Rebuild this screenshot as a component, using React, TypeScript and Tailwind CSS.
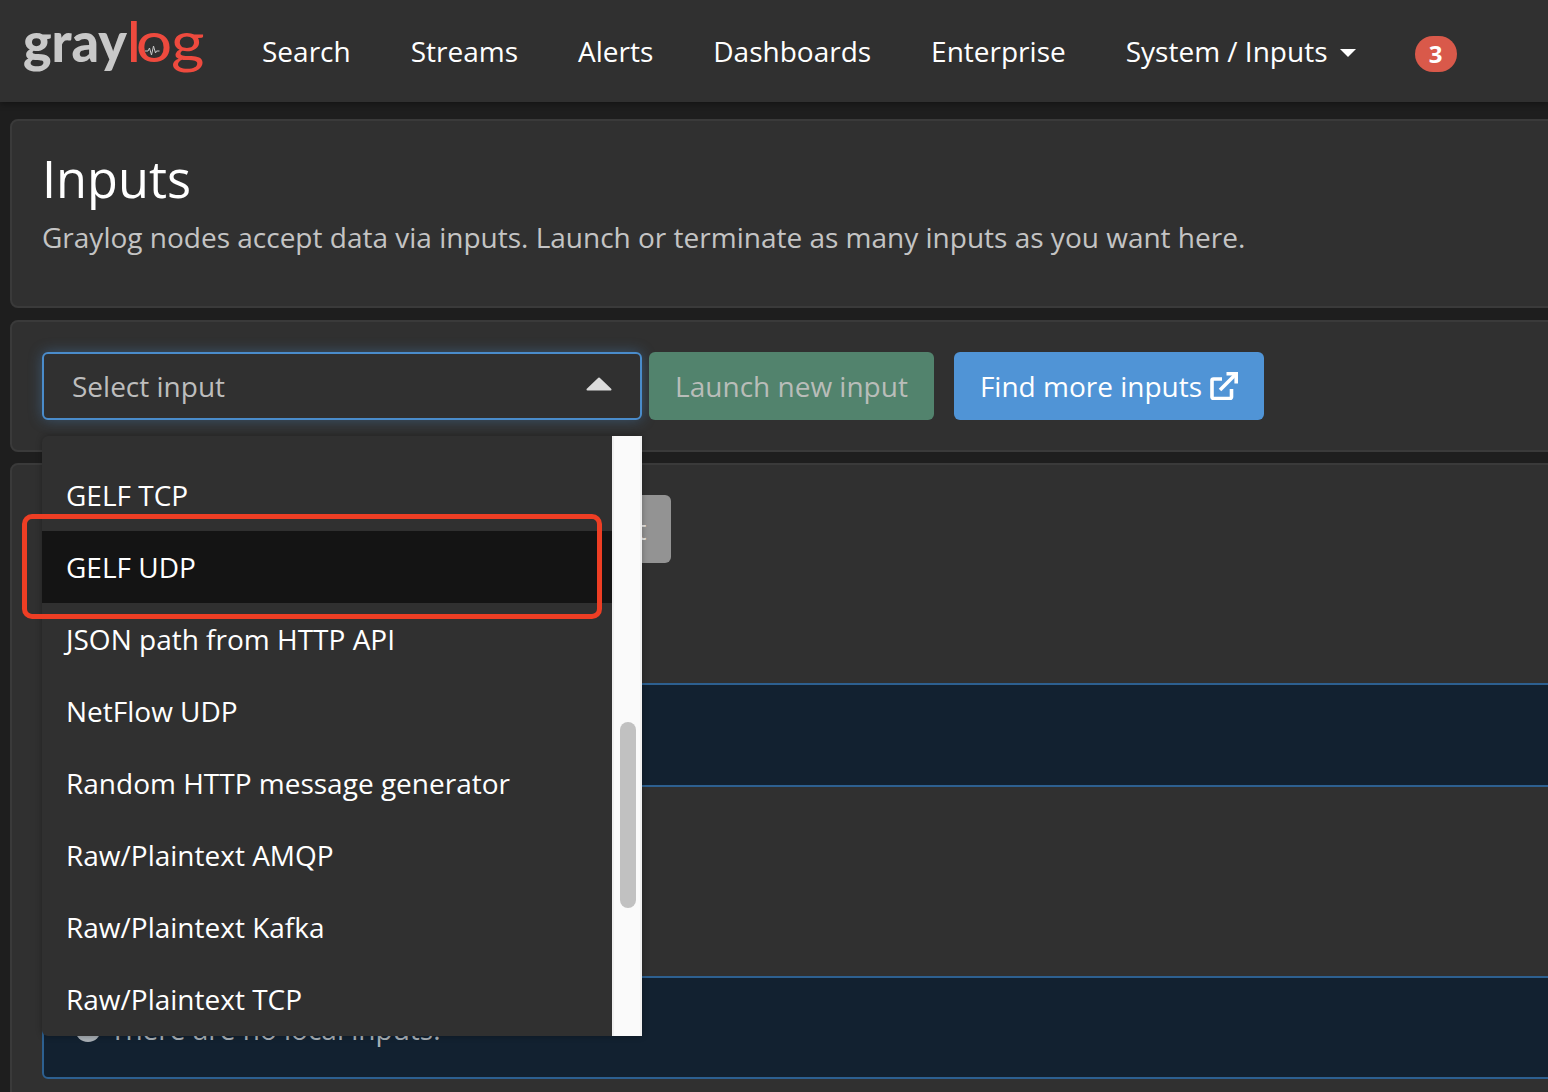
import React from "react";

const font = "font-['Open_Sans',sans-serif]";

function Logo() {
  return (
    <svg width="182" height="56" viewBox="0 0 182 56" className="shrink-0 overflow-visible">
      <text x="0" y="39" fontFamily="Lato, sans-serif" fontWeight="900" fontSize="56" textLength="104" lengthAdjust="spacingAndGlyphs" fill="#c8c8c8">gray</text>
      <text transform="translate(105 39) scale(1.15 1)" x="-1.500 6.700 37.300" y="0" fontFamily="Lato, sans-serif" fontWeight="400" fontSize="56" fill="#ee4a3e">log</text>
      <path d="M122 28h3l1.500-3 2 7 2-9 2 7 1-2h3" fill="none" stroke="#c8c8c8" strokeWidth="1" />
    </svg>
  );
}

function ExternalIcon() {
  return (
    <svg width="28" height="28" viewBox="0 0 28 28" fill="none" stroke="#fff" strokeWidth="3.600" className="shrink-0">
      <path d="M12 7H3.500A1.500 1.500 0 0 0 2 8.500V25a1.500 1.500 0 0 0 1.500 1.500H20a1.500 1.500 0 0 0 1.500-1.500v-8" />
      <path d="M10 18 26 2" />
      <path d="M16.500 1.800h9.700V11.500" />
    </svg>
  );
}

const items = [
  "GELF TCP",
  "GELF UDP",
  "JSON path from HTTP API",
  "NetFlow UDP",
  "Random HTTP message generator",
  "Raw/Plaintext AMQP",
  "Raw/Plaintext Kafka",
  "Raw/Plaintext TCP",
];

const nav = ["Search", "Streams", "Alerts", "Dashboards", "Enterprise"];

export default function App() {
  return (
    <div className={`${font} relative w-[1548px] h-[1092px] overflow-hidden bg-[#1e1e1e] text-[28px] leading-[40px] text-white`}>
      <header className="h-[102px] bg-[#303030] flex items-center pl-[23px] shadow-[0_2px_6px_rgba(0,0,0,0.35)]">
        <Logo />
        <nav className="flex items-center gap-[60px] ml-[57px]">
          {nav.map((n) => (
            <span key={n}>{n}</span>
          ))}
          <span className="flex items-center gap-[12px]">
            System / Inputs
            <span className="w-0 h-0 border-x-[8px] border-x-transparent border-t-[8px] border-t-white mt-[3px]" />
          </span>
        </nav>
        <span className="ml-[59px] mt-[6px] w-[42px] h-[36px] rounded-[18px] bg-[#d9594a] flex items-center justify-center text-[24px] font-bold">3</span>
      </header>

      <main className="w-[1600px] pl-[10px] pt-[17px] flex flex-col">
        <section className="h-[189px] rounded-[8px] border-2 border-[#3a3a3a] bg-[#303030] px-[30px] pt-[26px]">
          <h1 className="text-[50.500px] leading-[64px] text-white">Inputs</h1>
          <p className="text-[#c4c4c4] leading-[38px] mt-[7px]">Graylog nodes accept data via inputs. Launch or terminate as many inputs as you want here.</p>
        </section>

        <section className="mt-[12px] h-[132px] rounded-[8px] border-2 border-[#3a3a3a] bg-[#303030] px-[30px] pt-[30px] flex items-start">
          <div className="w-[600px] h-[68px] rounded-[6px] border-2 border-[#4a8ccb] bg-[#303030] shadow-[0_0_14px_rgba(74,140,203,0.4)] flex items-center justify-between pl-[28px] pr-[28px] text-[#bdbdbd]">
            <span>Select input</span>
            <svg width="26" height="14" viewBox="0 0 26 14" className="mb-[4px]">
              <path d="M13 1.500 24.500 12.500H1.500Z" fill="#dcdcdc" stroke="#dcdcdc" strokeWidth="2" strokeLinejoin="round" />
            </svg>
          </div>
          <button className="ml-[7px] w-[285px] h-[68px] rounded-[6px] bg-[#52836d] text-[#b9bdb9]">Launch new input</button>
          <button className="ml-[20px] w-[310px] h-[68px] rounded-[6px] bg-[#5094d6] text-white flex items-center justify-center gap-[8px]">
            Find more inputs
            <ExternalIcon />
          </button>
        </section>

        <section className="mt-[11px] h-[700px] rounded-[8px] border-2 border-[#3a3a3a] bg-[#303030] px-[30px] pt-[30px]">
          <div className="flex justify-start">
            <button className="ml-[508px] w-[121px] h-[68px] rounded-[6px] bg-[#939393] text-[#e6e6e6]">Reset</button>
          </div>
          <div className="mt-[120px] h-[104px] rounded-[6px] border-2 border-[#2d6090] bg-[#122130]" />
          <div className="mt-[189px] h-[103px] pt-[2px] rounded-[6px] border-2 border-[#2d6090] bg-[#122130] flex items-center pl-[31px] gap-[9px] text-[#a9b0b6]">
            <span className="w-[26px] h-[26px] rounded-full bg-[#a9b0b6] shrink-0" />
            There are no local inputs.
          </div>
        </section>
      </main>

      <div className="absolute left-[42px] top-[436px] w-[600px] h-[600px] flex rounded-l-[6px] overflow-hidden bg-[#303030] shadow-[0_0_6px_rgba(0,0,0,0.3)]">
        <ul className="w-[570px] pt-[23px]">
          {items.map((t) => (
            <li key={t} className={`h-[72px] flex items-center pl-[24px] ${t === "GELF UDP" ? "bg-[#141414]" : ""}`}>
              {t}
            </li>
          ))}
        </ul>
        <div className="relative w-[30px] bg-[#fafafa] border-x-2 border-[#f0f0f0]">
          <div className="absolute left-[6px] top-[286px] w-[16px] h-[186px] rounded-full bg-[#c1c1c1]" />
        </div>
      </div>

      <div className="absolute left-[22px] top-[514px] w-[580px] h-[105px] rounded-[10px] border-[5px] border-[#ee3e24]" />
    </div>
  );
}
